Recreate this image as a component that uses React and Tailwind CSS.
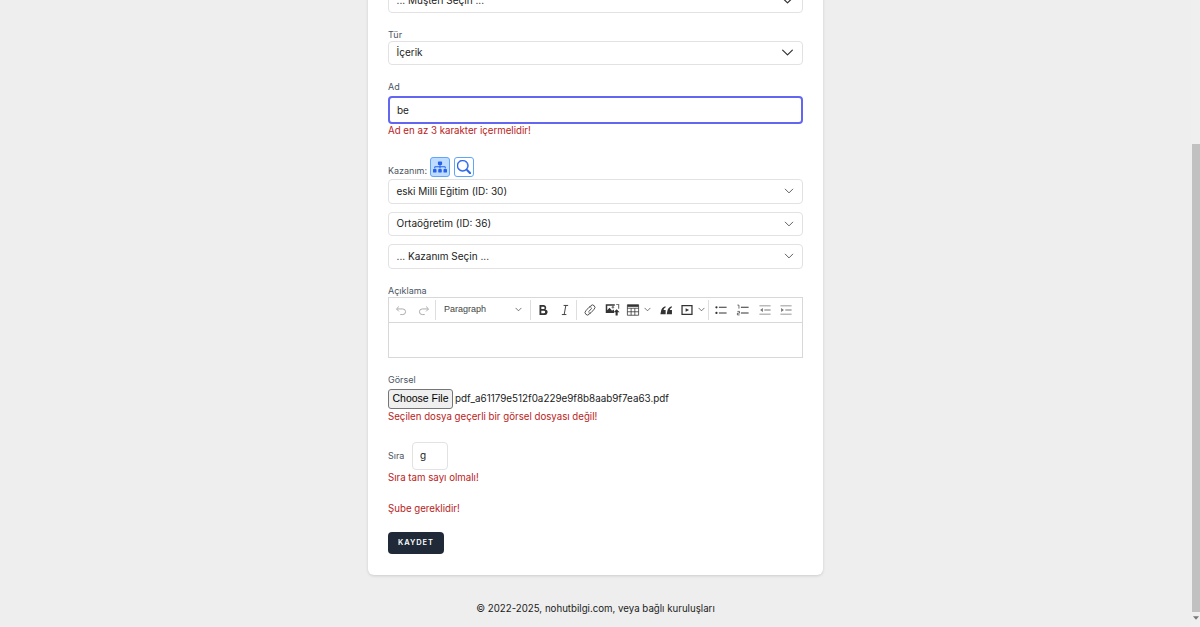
import React from "react";
import { FaSitemap } from "react-icons/fa";
import { BsSearch } from "react-icons/bs";

const Chevron = ({ className = "w-[13px] h-[13px] text-[#333]" }) => (
  <svg viewBox="0 0 16 16" fill="none" stroke="currentColor" strokeWidth="1.5" strokeLinecap="round" strokeLinejoin="round" className={className}>
    <path d="M2 5l6 6 6-6" />
  </svg>
);

const Select = ({ label, large, className = "" }) => (
  <div className={`flex h-[24.5px] items-center justify-between rounded-[4px] border border-[#e2e2e2] bg-white pl-[7.5px] pr-[8px] text-[10px] text-[#222] ${className}`}>
    <span>{label}</span>
    <Chevron className={large ? "w-[13px] h-[13px] text-[#333]" : "w-[10px] h-[10px] text-[#555]"} />
  </div>
);

const Label = ({ children, className = "" }) => (
  <div className={`pt-[2px] text-[9px] leading-[10px] text-[#4b5563] ${className}`}>{children}</div>
);

const Error = ({ children, className = "" }) => (
  <div className={`pt-[2px] text-[9.7px] leading-[12px] text-[#b91c1c] ${className}`}>{children}</div>
);

// one toolbar button, fixed width so the icons sit where the editor puts them
const Slot = ({ w, children }) => (
  <div className={`flex items-center justify-center ${w}`}>{children}</div>
);

const Tool = ({ children, className = "" }) => (
  <svg viewBox="0 0 20 20" className={`h-[14px] w-[14px] ${className}`}>{children}</svg>
);

const Sep = () => <div className="h-[20px] w-px shrink-0 bg-[#dedede]" />;

const Toolbar = () => (
  <div className="flex h-[25px] items-center border-b border-[#d8d8d8] text-[#333]">
    <Slot w="w-[23px]">
      <Tool className="text-[#aaa]">
        <path d="M7 5L3.5 8.5 7 12M4 8.5h8.5a4 4 0 010 8H9" fill="none" stroke="currentColor" strokeWidth="1.4" />
      </Tool>
    </Slot>
    <Slot w="w-[23px]">
      <Tool className="text-[#aaa]">
        <path d="M13 5l3.5 3.5L13 12M16 8.5H7.5a4 4 0 000 8H11" fill="none" stroke="currentColor" strokeWidth="1.4" />
      </Tool>
    </Slot>
    <Sep />
    <div className="flex w-[94px] items-center justify-between pl-[8px] pr-[8px] font-['Liberation_Sans',sans-serif] text-[9px] text-[#444]">
      <span>Paragraph</span>
      <Chevron className="h-[7px] w-[7px] text-[#333]" />
    </div>
    <Sep />
    <Slot w="w-[23px]">
      <Tool>
        <path d="M5 3h6a3.6 3.6 0 012.5 6.2A3.9 3.9 0 0111.5 17H5zm2.6 2.3v3.4h3a1.7 1.7 0 000-3.4zm0 5.6v3.8h3.6a1.9 1.9 0 000-3.8z" fill="currentColor" fillRule="evenodd" />
      </Tool>
    </Slot>
    <Slot w="w-[22px]">
      <Tool>
        <path d="M8 3.5h6.5M5.5 16.5H12M11.2 3.5L8.8 16.5" fill="none" stroke="currentColor" strokeWidth="1.3" />
      </Tool>
    </Slot>
    <Sep />
    <Slot w="w-[25px]">
      <Tool>
        <path d="M8 12.5l4.5-5M9.5 5.5l1.6-1.6a3.4 3.4 0 014.9 4.9l-4.5 5a3 3 0 01-3.5.2M10.5 14.5l-1.6 1.6a3.4 3.4 0 01-4.9-4.9l4.5-5a3 3 0 013.5-.2" fill="none" stroke="currentColor" strokeWidth="1.2" />
      </Tool>
    </Slot>
    <Slot w="w-[20px]">
      <svg viewBox="0 0 20 20" className="h-[15px] w-[15px]">
        <path d="M1 3h12v2H3v6l3-3.5 3.5 4 1.5-1.500 1 1v3.500H1z" fill="currentColor" />
        <path d="M15 2.500h4V9h-1.600V4.100H15z" fill="#777" />
        <circle cx="10.500" cy="7" r="1.600" fill="#777" />
        <path d="M15.500 9.500l4 4h-2.600V18h-2.800v-4.500H11.500z" fill="currentColor" />
      </svg>
    </Slot>
    <Slot w="w-[21px]">
      <svg viewBox="0 0 20 20" className="h-[14px] w-[14px]">
        <path d="M2 2.500h16v15H2zM2 7.500h16M2 12.500h16M7.300 7.500v10M12.600 7.500v10" fill="none" stroke="currentColor" strokeWidth="1.100" />
        <path d="M2 2.500h16v3H2z" fill="currentColor" />
      </svg>
    </Slot>
    <Slot w="w-[9px]">
      <Chevron className="h-[7px] w-[7px] text-[#333]" />
    </Slot>
    <Slot w="w-[27px]">
      <svg viewBox="0 0 20 20" className="h-[14px] w-[14px]">
        <path d="M2 16l1-5c.6-3 2.600-5.200 6-6.500l.7 1.600C7.800 7 6.800 8.300 6.500 10H9.500V16zM11 16l1-5c.6-3 2.600-5.200 6-6.500l.7 1.600c-1.900.9-2.900 2.200-3.200 3.900H18.500V16z" fill="currentColor" />
      </svg>
    </Slot>
    <Slot w="w-[16px]">
      <svg viewBox="0 0 20 20" className="h-[14px] w-[14px]">
        <path d="M2 3h16v14H2zM3.800 4.800v10.400h12.400V4.800z" fill="currentColor" fillRule="evenodd" />
        <path d="M8 7.500l5 2.500-5 2.500z" fill="currentColor" />
      </svg>
    </Slot>
    <Slot w="w-[13px]">
      <Chevron className="h-[7px] w-[7px] text-[#333]" />
    </Slot>
    <Sep />
    <Slot w="w-[23px]">
      <Tool>
        <path d="M7 5.500h11v1.400H7zM7 13.500h11v1.400H7z" fill="currentColor" />
        <circle cx="3.500" cy="6.200" r="1.600" fill="currentColor" />
        <circle cx="3.500" cy="14.200" r="1.600" fill="currentColor" />
      </Tool>
    </Slot>
    <Slot w="w-[22px]">
      <Tool>
        <path d="M7 5.500h11v1.400H7zM7 13.500h11v1.400H7z" fill="currentColor" />
        <path d="M2 3h2.200v5M2 12h3v2.500H2V17h3.200" fill="none" stroke="currentColor" strokeWidth="1" />
      </Tool>
    </Slot>
    <Slot w="w-[21px]">
      <Tool className="text-[#777]">
        <path d="M2 3.500h16v1.300H2zM9 9.300h9v1.300H9zM2 15.200h16v1.300H2zM7 7v6l-4-3z" fill="currentColor" />
      </Tool>
    </Slot>
    <Slot w="w-[22px]">
      <Tool className="text-[#777]">
        <path d="M2 3.500h16v1.300H2zM9 9.300h9v1.300H9zM2 15.200h16v1.300H2zM3 7v6l4-3z" fill="currentColor" />
      </Tool>
    </Slot>
  </div>
);

export default function App() {
  return (
    <div className="flex h-[627px] w-full overflow-hidden bg-[#eeeeee] font-['Inter',_'Noto_Sans',sans-serif]">
      <main className="flex flex-1 flex-col items-center -mt-[30px]">
        <div className="w-[455px] rounded-[6px] bg-white px-[20px] pt-[18px] pb-[21px] shadow-[0_1px_3px_rgba(0,0,0,0.14)]">
          <Select label="... Müşteri Seçin ..." large />

          <Label className="mt-[15px] mb-[1px]">Tür</Label>
          <Select label="İçerik" large />

          <Label className="mt-[15px] mb-[4px]">Ad</Label>
          <div className="flex h-[28px] items-center rounded-[4px] border-2 border-[#6366f1] bg-white pl-[7px] text-[10px] text-[#222]">
            be
          </div>
          <Error className="mt-[-1.5px]">Ad en az 3 karakter içermelidir!</Error>

          <div className="mt-[20px] flex items-end gap-[4px]">
            <span className="mr-[1px] w-[37px] text-[9px] leading-[12px] text-[#4b5563]">Kazanım:</span>
            <button className="flex h-[20px] w-[20px] items-center justify-center rounded-[3px] border border-[#60a5fa] bg-[#bfdbfe] text-[#2563eb]">
              <FaSitemap size={14} />
            </button>
            <button className="flex h-[20px] w-[20px] items-center justify-center rounded-[3px] border border-[#60a5fa] bg-white text-[#2563eb]">
              <BsSearch size={14} strokeWidth={0.6} />
            </button>
          </div>
          <Select label="eski Milli Eğitim (ID: 30)" className="mt-[2.5px]" />
          <Select label="Ortaöğretim (ID: 36)" className="mt-[8px]" />
          <Select label="... Kazanım Seçin ..." className="mt-[8px]" />

          <Label className="mt-[15px] mb-[1px]">Açıklama</Label>
          <div className="h-[61px] border border-[#d8d8d8] bg-white">
            <Toolbar />
          </div>

          <Label className="mt-[15px] mb-[4px]">Görsel</Label>
          <div className="flex items-center gap-[2px] text-[9.85px] text-[#222]">
            <button className="h-[20px] w-[65px] rounded-[3px] border border-[#767676] bg-[#efefef] font-['Liberation_Sans',sans-serif] text-[10.5px] text-black">
              Choose File
            </button>
            <span>pdf_a61179e512f0a229e9f8b8aab9f7ea63.pdf</span>
          </div>
          <Error>Seçilen dosya geçerli bir görsel dosyası değil!</Error>

          <div className="mt-[19px] flex items-center gap-[8px]">
            <span className="w-[16px] text-[9px] text-[#4b5563]">Sıra</span>
            <div className="flex h-[28px] w-[36px] items-center rounded-[4px] border border-[#e2e2e2] pl-[7px] text-[10px] text-[#222]">
              g
            </div>
          </div>
          <Error>Sıra tam sayı olmalı!</Error>

          <Error className="mt-[17px]">Şube gereklidir!</Error>

          <button className="mt-[17px] block h-[22px] w-[56px] rounded-[4px] bg-[#1f2937] pt-[1px] text-[7.5px] font-semibold tracking-[0.12em] text-white">
            KAYDET
          </button>
        </div>
        <div className="mt-[27px] text-[9.7px] leading-[14px] text-[#222]">
          © 2022-2025, nohutbilgi.com, veya bağlı kuruluşları
        </div>
      </main>
      <aside className="flex w-[9px] flex-col items-center bg-[#efefef]">
        <div className="mt-[144px] h-[468px] w-[8px] bg-[#c1c1c1]" />
        <svg viewBox="0 0 10 6" className="mt-[4px] h-[4px] w-[6px] text-[#777]">
          <path d="M0 0h10L5 6z" fill="currentColor" />
        </svg>
      </aside>
    </div>
  );
}
